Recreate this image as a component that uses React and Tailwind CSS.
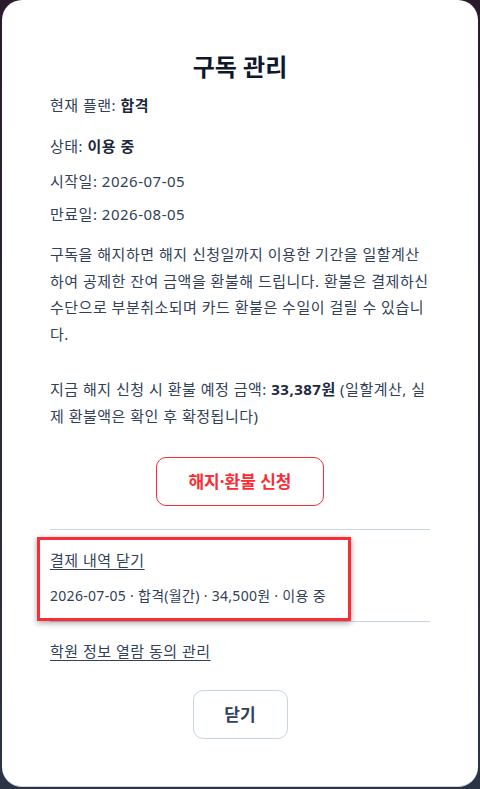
import { useState } from "react";

const font = { fontFamily: '"Noto Sans", "Noto Sans CJK KR", sans-serif' };

function SubscriptionModal() {
  const [historyOpen, setHistoryOpen] = useState(true);

  return (
    <div className="relative h-[787px] w-full rounded-[20px] border-b border-slate-300 bg-white px-[48px] pt-[51px] text-[15px] tracking-[0.5px] text-slate-700">
      <h2 className="text-center text-[24px] font-bold leading-[32px] tracking-normal text-slate-900">구독 관리</h2>

      <p className="mt-[10px] leading-6">
        현재 플랜: <b className="font-bold text-slate-800">합격</b>
      </p>
      <p className="mt-[17px] leading-6">
        상태: <b className="font-bold text-slate-800">이용 중</b>
      </p>
      <p className="mt-[11px] leading-6">시작일: 2026-07-05</p>
      <p className="mt-[9px] leading-6">만료일: 2026-08-05</p>

      <p className="mt-[15px] leading-[26.7px]">
        구독을 해지하면 해지 신청일까지 이용한 기간을 일할계산하여 공제한 잔여 금액을 환불해 드립니다. 환불은 결제하신 수단으로 부분취소되며 카드 환불은 수일이 걸릴 수 있습니다.
      </p>
      <p className="mt-[28px] leading-[26.7px]">
        지금 해지 신청 시 환불 예정 금액: <b className="font-bold text-slate-800">33,387원</b> (일할계산, 실제 환불액은 확인 후 확정됩니다)
      </p>

      <div className="mt-[28px] flex justify-center">
        <button
          type="button"
          className="h-[49px] w-[168px] rounded-[10px] border border-red-500 bg-white text-[17px] font-bold tracking-normal text-red-500"
        >
          해지·환불 신청
        </button>
      </div>

      <div className="mt-[23px] border-t border-slate-300" />

      <div className="relative pt-[18px] pb-[15px]">
        <button
          type="button"
          onClick={() => setHistoryOpen(!historyOpen)}
          className="block leading-6 underline underline-offset-[3px]"
        >
          {historyOpen ? "결제 내역 닫기" : "결제 내역 보기"}
        </button>
        {historyOpen && (
          <p className="mt-[14px] text-[14px] leading-5 tracking-[0.3px]">2026-07-05 · 합격(월간) · 34,500원 · 이용 중</p>
        )}
        {/* 강조 표시 */}
        <div className="pointer-events-none absolute -left-[13px] top-[7px] h-[84px] w-[314px] border-[3px] border-red-500 shadow-[0_2px_6px_rgba(0,0,0,0.35)]" />
      </div>

      <div className="border-t border-slate-300" />

      <button type="button" className="mt-[17px] block leading-6 underline underline-offset-[3px]">
        학원 정보 열람 동의 관리
      </button>

      <div className="mt-[27px] flex justify-center">
        <button
          type="button"
          className="h-[49px] w-[95px] rounded-[10px] border border-slate-300 bg-white text-[17px] font-bold tracking-normal text-slate-700"
        >
          닫기
        </button>
      </div>
    </div>
  );
}

export default function App() {
  return (
    <div style={font} className="h-[789px] w-[480px] bg-gradient-to-b from-[#2a1b2c] to-[#2b3445] px-[2px]">
      <SubscriptionModal />
    </div>
  );
}
